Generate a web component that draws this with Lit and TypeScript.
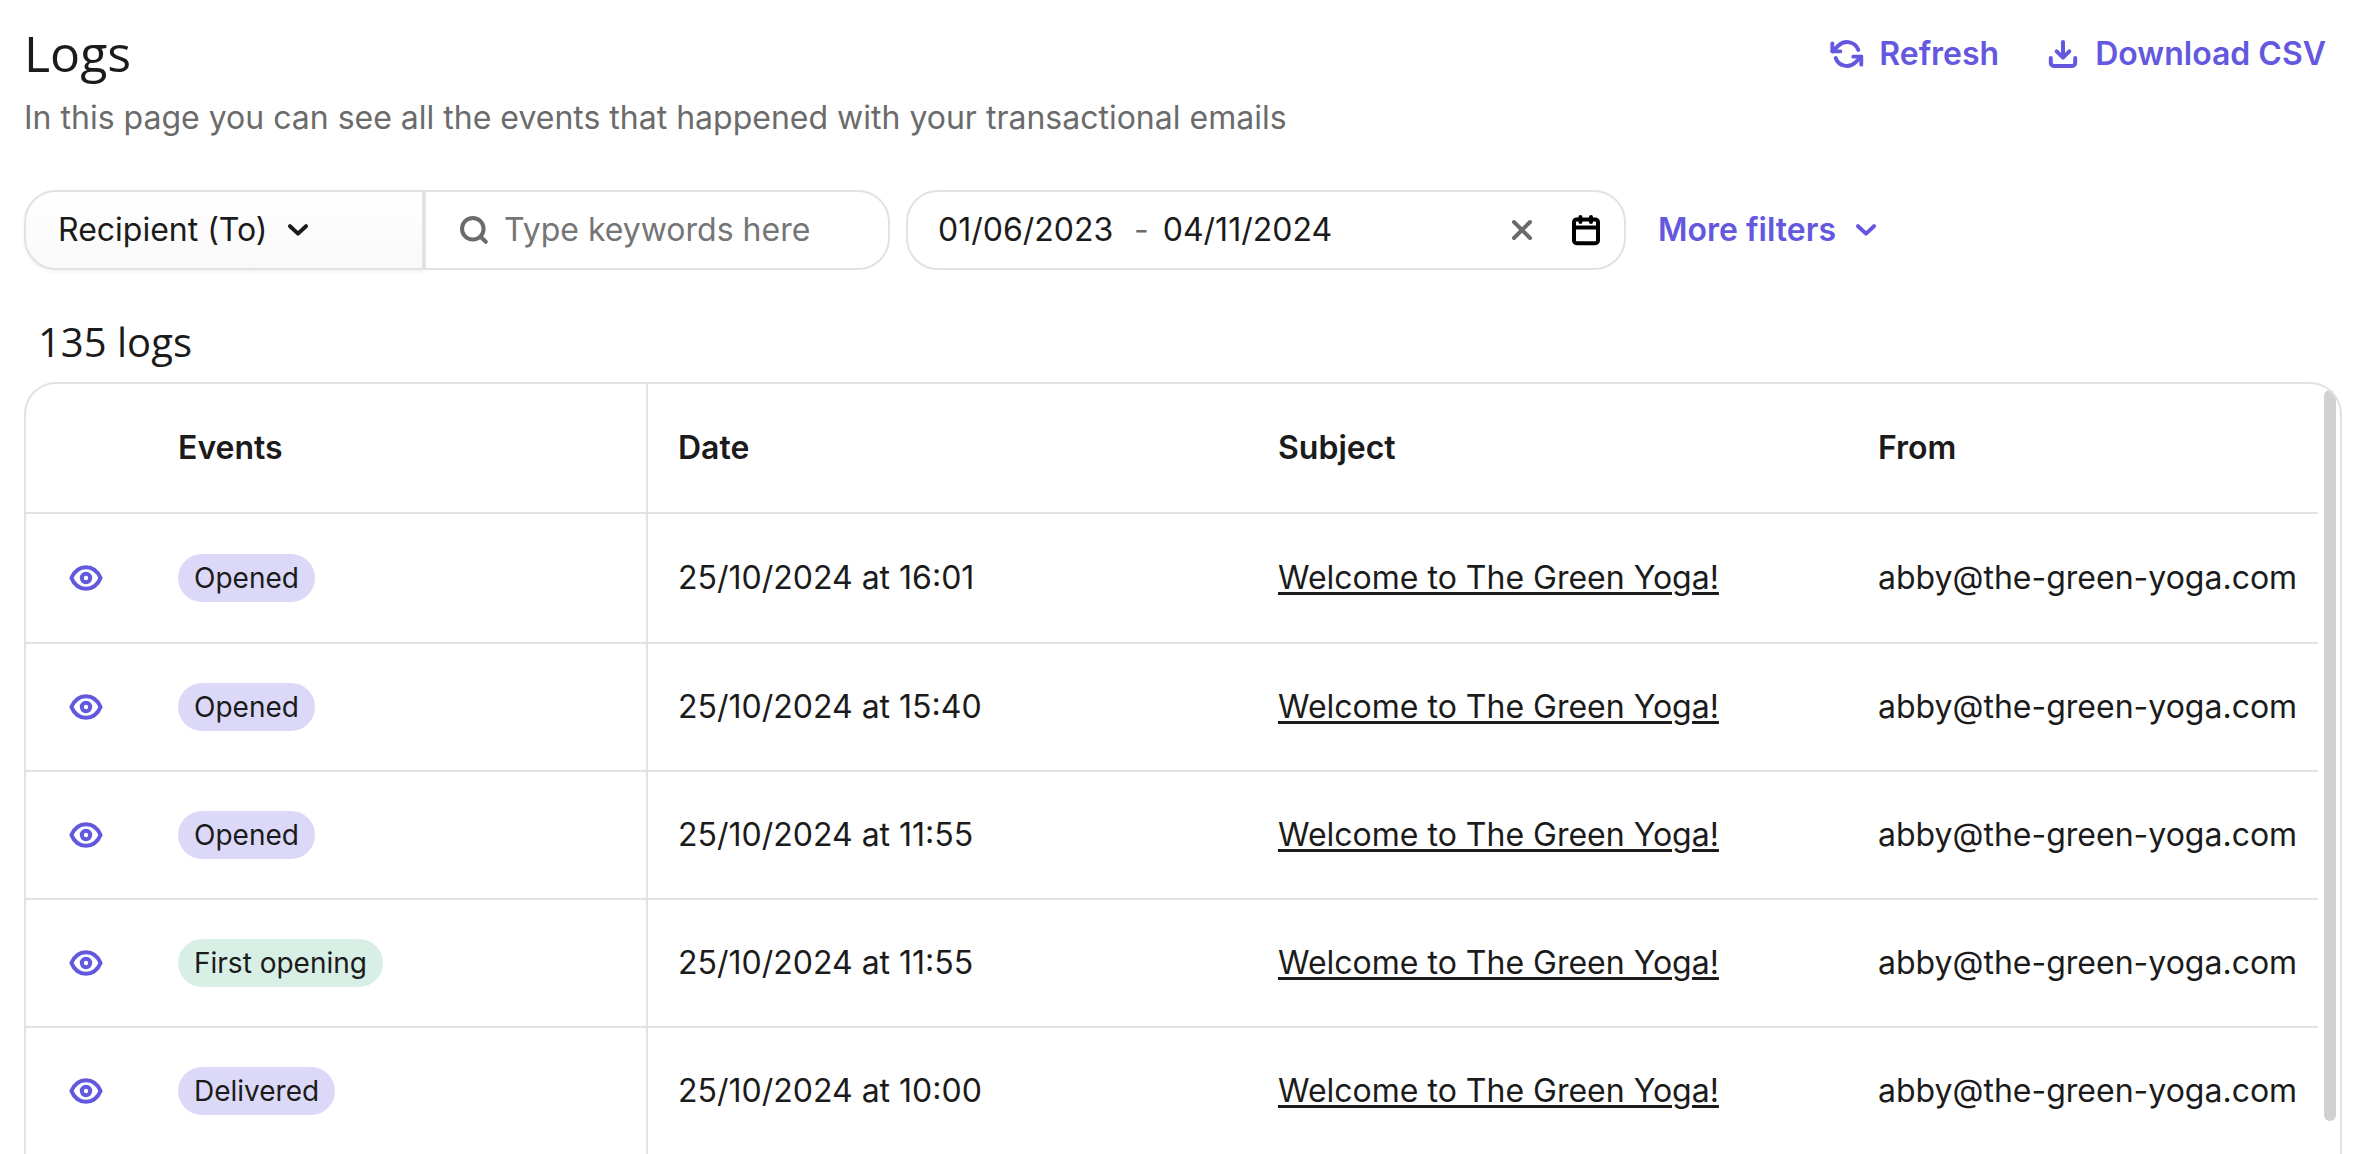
import { LitElement, html, css, svg } from "lit";
import { customElement, property } from "lit/decorators.js";
import { classMap } from "lit/directives/class-map.js";

type Tone = "violet" | "green";

interface LogEntry {
  event: string;
  tone: Tone;
  date: string;
  subject: string;
  from: string;
}

const SUBJECT = "Welcome to The Green Yoga!";
const SENDER = "abby@the-green-yoga.com";

const LOGS: LogEntry[] = [
  { event: "Opened", tone: "violet", date: "25/10/2024 at 16:01", subject: SUBJECT, from: SENDER },
  { event: "Opened", tone: "violet", date: "25/10/2024 at 15:40", subject: SUBJECT, from: SENDER },
  { event: "Opened", tone: "violet", date: "25/10/2024 at 11:55", subject: SUBJECT, from: SENDER },
  { event: "First opening", tone: "green", date: "25/10/2024 at 11:55", subject: SUBJECT, from: SENDER },
  { event: "Delivered", tone: "violet", date: "25/10/2024 at 10:00", subject: SUBJECT, from: SENDER },
];

const SHAPES = {
  refresh: svg`
    <g transform="scale(1.3333)">
      <path stroke-width="2.9" d="M1 4v6h6M22.7 20v-6h-6" />
      <path stroke-width="2.9" d="M20.5 9A9 9 0 0 0 5.64 5.64L1 10M22.7 14l-4.34 4.36A9 9 0 0 1 3.5 15" />
    </g>`,
  download: svg`
    <path d="M16 4v15.5M9.7 13.4l6.3 6.2 6.3-6.2" />
    <path d="M3.8 20v5a3 3 0 0 0 3 3h18.4a3 3 0 0 0 3-3v-5" />`,
  chevron: svg`<path d="M8 12.2l8 7.4 8-7.4" />`,
  search: svg`<circle cx="14.8" cy="14.7" r="10.8" /><path d="M22.8 23l5 4.8" />`,
  close: svg`<path d="M8 8l16 16M24 8L8 24" />`,
  calendar: svg`
    <rect x="4" y="5.4" width="24" height="23.8" rx="2.6" />
    <path d="M4 13.4h24M10.4 2.9v5M21 2.9v5" />`,
  eye: svg`
    <path d="M1.4 16C4 10 9 5.2 16 5.2S28 10 30.6 16C28 22 23 26.8 16 26.8S4 22 1.4 16Z" />
    <circle cx="16" cy="16" r="4.2" />`,
};

@customElement("line-icon")
class LineIcon extends LitElement {
  @property() name: keyof typeof SHAPES = "chevron";

  static styles = css`
    :host {
      display: inline-flex;
      flex: none;
      pointer-events: none;
    }
    .icon {
      display: block;
      width: 32px;
      height: 32px;
      overflow: visible;
      fill: none;
      stroke: currentColor;
      stroke-width: 4;
      stroke-linecap: round;
      stroke-linejoin: round;
    }
  `;

  render() {
    return html`<svg class="icon" viewBox="0 0 32 32" aria-hidden="true">${SHAPES[this.name]}</svg>`;
  }
}

@customElement("app-root")
class AppRoot extends LitElement {
  static styles = css`
    :host {
      --ink: #1b1b1b;
      --muted: #6b6b6b;
      --accent: #6358de;
      --line: #e2e2e2;
      display: flex;
      flex-direction: column;
      box-sizing: border-box;
      height: 100vh;
      overflow: hidden;
      padding: 20px 16px 0 24px;
      background: #fff;
      color: var(--ink);
      font: 400 32px/48px Inter, "Liberation Sans", sans-serif;
    }
    *,
    *::before {
      box-sizing: border-box;
    }
    button,
    input,
    select {
      margin: 0;
      padding: 0;
      border: 0;
      background: none;
      color: inherit;
      font: inherit;
      outline: none;
    }
    button {
      cursor: pointer;
    }
    .header {
      display: flex;
      justify-content: space-between;
      align-items: flex-start;
    }
    .heading {
      display: flex;
      flex-direction: column;
      gap: 8px;
    }
    .title,
    .count {
      margin: 0;
      font-family: "Open Sans", "Noto Sans", sans-serif;
      font-weight: 500;
    }
    .title {
      font-size: 50px;
      line-height: 66px;
    }
    .intro {
      margin: 0;
      color: var(--muted);
    }
    .actions {
      display: flex;
      gap: 48px;
      padding: 10px 16px 0 0;
    }
    .action {
      display: flex;
      align-items: center;
      gap: 16px;
      color: var(--accent);
      font-weight: 600;
      white-space: nowrap;
    }
    .filters {
      display: flex;
      align-items: center;
      gap: 16px;
      margin-top: 48px;
    }
    .search {
      display: flex;
    }
    .field {
      display: flex;
      align-items: center;
      height: 80px;
      border: 2px solid var(--line);
      background: #fff;
    }
    .scope {
      gap: 14px;
      width: 400px;
      padding-left: 32px;
      border-radius: 32px 0 0 32px;
      background: linear-gradient(#fff, #f9f9f9);
      box-shadow: 0 2px 4px rgba(0, 0, 0, 0.06);
    }
    .select {
      appearance: none;
      cursor: pointer;
    }
    .keywords {
      gap: 14px;
      width: 466px;
      padding: 0 30px 0 32px;
      border-radius: 0 32px 32px 0;
      color: var(--muted);
    }
    .text {
      flex: 1;
      min-width: 0;
      color: var(--ink);
    }
    .text::placeholder {
      color: #757575;
      opacity: 1;
    }
    .range {
      width: 720px;
      padding: 0 22px 0 30px;
      border-radius: 32px;
    }
    .date {
      width: 180px;
    }
    .dash {
      padding: 0 14px 0 16px;
      color: var(--muted);
    }
    .tools {
      display: flex;
      gap: 32px;
      margin-left: auto;
    }
    .tool {
      display: flex;
    }
    .clear {
      color: var(--muted);
    }
    .open {
      color: #000;
    }
    .more {
      gap: 14px;
      margin-left: 16px;
    }
    .count {
      margin: 44px 0 12px;
      padding-left: 14px;
      font-size: 40px;
      line-height: 56px;
    }
    .panel {
      position: relative;
      flex: 1;
      min-height: 0;
      padding-right: 22px;
      overflow: hidden;
      border: 2px solid var(--line);
      border-bottom: 0;
      border-radius: 32px 32px 0 0;
    }
    .thumb {
      position: absolute;
      top: 6px;
      right: 4px;
      bottom: 33px;
      width: 12px;
      border-radius: 6px;
      background: #d1d1d1;
    }
    .table {
      width: 100%;
      table-layout: fixed;
      border-collapse: separate;
      border-spacing: 0;
    }
    .view-col {
      width: 120px;
    }
    .event-col {
      width: 500px;
    }
    .wide-col {
      width: 600px;
    }
    .cell {
      height: 128px;
      padding: 0 0 0 32px;
      border-bottom: 2px solid var(--line);
      text-align: left;
      vertical-align: middle;
      white-space: nowrap;
    }
    .head,
    .first {
      height: 130px;
    }
    .head {
      font-weight: 600;
    }
    .view {
      padding-left: 44px;
    }
    .split {
      padding-left: 30px;
      border-left: 2px solid var(--line);
    }
    .eye {
      display: flex;
      color: var(--accent);
    }
    .pill {
      display: block;
      width: fit-content;
      padding: 0 16px;
      border-radius: 24px;
      font-size: 28px;
    }
    .violet {
      background: #dcd9f8;
    }
    .green {
      background: #d8efe6;
    }
    .subject {
      color: inherit;
      text-decoration: underline;
      text-decoration-thickness: 3px;
      text-underline-offset: 3px;
    }
  `;

  private renderRow(log: LogEntry, index: number) {
    const cell = (extra: Record<string, boolean> = {}) =>
      classMap({ cell: true, first: index === 0, ...extra });
    return html`
      <tr>
        <td class=${cell({ view: true })}>
          <button class="eye" aria-label="View event"><line-icon name="eye"></line-icon></button>
        </td>
        <td class=${cell()}>
          <span class=${classMap({ pill: true, [log.tone]: true })}>${log.event}</span>
        </td>
        <td class=${cell({ split: true })}>${log.date}</td>
        <td class=${cell()}><a class="subject" href="#">${log.subject}</a></td>
        <td class=${cell()}>${log.from}</td>
      </tr>
    `;
  }

  render() {
    return html`
      <header class="header">
        <div class="heading">
          <h1 class="title">Logs</h1>
          <p class="intro">In this page you can see all the events that happened with your transactional emails</p>
        </div>
        <div class="actions">
          <button class="action"><line-icon name="refresh"></line-icon>Refresh</button>
          <button class="action"><line-icon name="download"></line-icon>Download CSV</button>
        </div>
      </header>

      <form class="filters">
        <div class="search">
          <div class="field scope">
            <select class="select" aria-label="Search in">
              <option>Recipient (To)</option>
            </select>
            <line-icon name="chevron"></line-icon>
          </div>
          <label class="field keywords">
            <line-icon name="search"></line-icon>
            <input class="text" type="text" aria-label="Keywords" placeholder="Type keywords here" />
          </label>
        </div>
        <div class="field range">
          <input class="date" type="text" aria-label="Start date" value="01/06/2023" />
          <span class="dash">-</span>
          <input class="date" type="text" aria-label="End date" value="04/11/2024" />
          <div class="tools">
            <button class="tool clear" type="button" aria-label="Clear dates"><line-icon name="close"></line-icon></button>
            <button class="tool open" type="button" aria-label="Open calendar"><line-icon name="calendar"></line-icon></button>
          </div>
        </div>
        <button class="action more" type="button">More filters<line-icon name="chevron"></line-icon></button>
      </form>

      <h2 class="count">135 logs</h2>

      <div class="panel">
        <table class="table">
          <colgroup>
            <col class="view-col" />
            <col class="event-col" />
            <col class="wide-col" />
            <col class="wide-col" />
            <col />
          </colgroup>
          <thead>
            <tr>
              <th class="cell head" aria-label="View"></th>
              <th class="cell head">Events</th>
              <th class="cell head split">Date</th>
              <th class="cell head">Subject</th>
              <th class="cell head">From</th>
            </tr>
          </thead>
          <tbody>
            ${LOGS.map((log, index) => this.renderRow(log, index))}
          </tbody>
        </table>
        <div class="thumb"></div>
      </div>
    `;
  }
}
